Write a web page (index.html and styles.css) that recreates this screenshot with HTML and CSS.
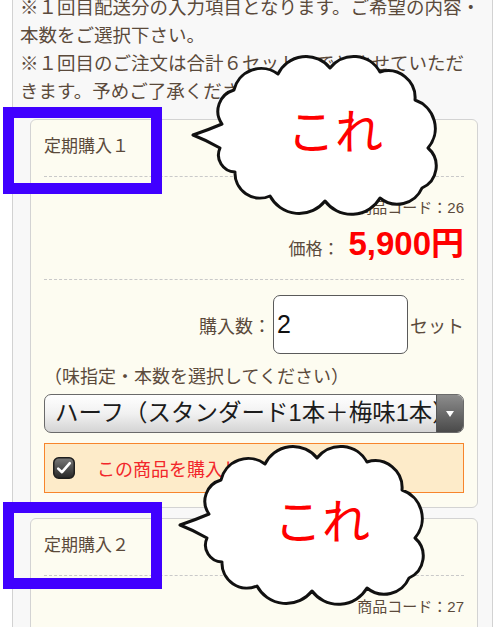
FILE: index.html
```html
<!DOCTYPE html>
<html lang="ja">
<head>
<meta charset="utf-8">
<title>定期購入</title>
<link rel="stylesheet" href="styles.css">
</head>
<body>
<div class="panel">
  <div class="notes">
    <p>※１回目配送分の入力項目となります。ご希望の内容・本数をご選択下さい。</p>
    <p>※１回目のご注文は合計６セットまでとさせていただ<br>きます。予めご了承ください。</p>
  </div>
  <div class="cards">
    <section class="card">
      <h2 class="card-title">定期購入１</h2>
      <div class="info">
        <div class="code">商品コード：26</div>
        <div class="price"><span class="price-label">価格：</span><span class="price-value">5,900円</span></div>
      </div>
      <div class="qty-row">
        <span class="qty-label">購入数：</span>
        <input class="qty" type="text" value="2">
        <span class="qty-unit">セット</span>
      </div>
      <div class="hint">（味指定・本数を選択してください）</div>
      <div class="select">
        <span class="select-text">ハーフ（スタンダード1本＋梅味1本）</span>
        <span class="select-btn"><svg width="10" height="8" viewBox="0 0 10 8"><path d="M1 1 L9 1 L5 7 Z" fill="#fff"/></svg></span>
      </div>
      <div class="buy">
        <span class="check"><svg width="22" height="22" viewBox="0 0 22 22"><defs><linearGradient id="cbg" x1="0" y1="0" x2="0" y2="1"><stop offset="0" stop-color="#7a7a7a"/><stop offset="1" stop-color="#262626"/></linearGradient></defs><rect x="0.75" y="0.75" width="20.5" height="20.5" rx="5" fill="url(#cbg)" stroke="#1e1e1e" stroke-width="1.5"/><path d="M5.2 11.6 L9 15.2 L16.8 6.2" fill="none" stroke="#fff" stroke-width="2.6" stroke-linecap="round" stroke-linejoin="round"/></svg></span>
        <span class="buy-text">この商品を購入します</span>
      </div>
    </section>
    <section class="card">
      <h2 class="card-title">定期購入２</h2>
      <div class="info">
        <div class="code">商品コード：27</div>
        <div class="price"><span class="price-label">価格：</span><span class="price-value">5,900円</span></div>
      </div>
    </section>
  </div>
</div>

<div class="mark mark-1"></div>
<div class="mark mark-2"></div>

<div class="cloud cloud-1">
  <svg width="260" height="175" viewBox="0 0 260 175"><path d="M32 76 A22 22 0 0 1 44 42 A28 28 0 0 1 88 26 A31 31 0 0 1 140 20 A30 30 0 0 1 190 24 A27 27 0 0 1 225 52 A30 30 0 0 1 238 100 A24 24 0 0 1 232 140 A27 27 0 0 1 190 150 A33 33 0 0 1 135 153 A33 33 0 0 1 80 148 A25 25 0 0 1 45 124 A17 17 0 0 1 30 100 Q16 92 3 87 Q18 82 32 76 Z" fill="#fff" stroke="#111" stroke-width="3" stroke-linejoin="round"/></svg>
  <span class="cloud-text">これ</span>
</div>
<div class="cloud cloud-2">
  <svg width="260" height="175" viewBox="0 0 260 175"><path d="M32 76 A22 22 0 0 1 44 42 A28 28 0 0 1 88 26 A31 31 0 0 1 140 20 A30 30 0 0 1 190 24 A27 27 0 0 1 225 52 A30 30 0 0 1 238 100 A24 24 0 0 1 232 140 A27 27 0 0 1 190 150 A33 33 0 0 1 135 153 A33 33 0 0 1 80 148 A25 25 0 0 1 45 124 A17 17 0 0 1 30 100 Q16 92 3 87 Q18 82 32 76 Z" fill="#fff" stroke="#111" stroke-width="3" stroke-linejoin="round"/></svg>
  <span class="cloud-text">これ</span>
</div>
</body>
</html>
```
FILE: styles.css
```css
* { box-sizing: border-box; }
html, body { margin: 0; padding: 0; background: #fff; }
body {
  position: relative;
  width: 498px;
  height: 627px;
  overflow: hidden;
  font-family: "Liberation Sans", "Noto Sans CJK JP", sans-serif;
  color: #5b4a3b;
}

.panel {
  margin: -7px 5px 0 12px;
  background: #f8f8f8;
  border: 1px solid #d2d2d2;
  padding: 0 7px 20px;
}

.notes p {
  margin: 0;
  font-size: 18.5px;
  line-height: 28px;
}

.cards { padding: 13px 7px 0 10px; }

.card {
  background: #fdfcf1;
  border: 1px solid #d3d3d3;
  border-radius: 6px;
  padding: 0 13px 14px;
}
.card + .card { margin-top: 10px; }

.card-title {
  margin: 0;
  height: 57px;
  font-size: 17px;
  font-weight: normal;
  line-height: 20px;
  padding: 17px 0 0;
  border-bottom: 1px dashed #c9c9c9;
}

.info {
  display: flex;
  flex-direction: column;
  align-items: flex-end;
  height: 103px;
  padding: 22px 0 0;
  border-bottom: 1px dashed #c9c9c9;
}
.code { height: 18px; font-size: 15px; line-height: 18px; }
.price {
  display: flex;
  align-items: baseline;
  height: 36px;
  margin-top: 9px;
}
.price-label { font-size: 17px; line-height: 36px; margin-right: 9px; }
.price-value { font-size: 33px; line-height: 36px; font-weight: bold; color: #ff0000; }

.qty-row {
  display: flex;
  justify-content: flex-end;
  align-items: center;
  gap: 2px;
  padding-top: 15px;
  font-size: 18px;
}
.qty {
  width: 135px;
  height: 59px;
  border: 1px solid #5a5a5a;
  border-radius: 7px;
  background: #fff;
  font-family: "Liberation Sans", sans-serif;
  font-size: 25px;
  color: #111;
  padding: 0 3px;
  margin: 0;
}

.hint {
  margin-top: 11px;
  height: 24px;
  font-size: 18px;
  line-height: 24px;
}

.select {
  margin-top: 5px;
  height: 39px;
  display: flex;
  border: 1px solid #6a6a6a;
  border-radius: 7px;
  overflow: hidden;
  background: linear-gradient(#ffffff, #f1f1f1 50%, #d4d4d4);
}
.select-text {
  flex: 1;
  min-width: 0;
  overflow: hidden;
  white-space: nowrap;
  padding-left: 10px;
  font-size: 23.5px;
  line-height: 37px;
  color: #1c1c1c;
}
.select-btn {
  width: 27px;
  display: flex;
  align-items: center;
  justify-content: center;
  background: linear-gradient(#8c8c8c, #4a4a4a);
  border-left: 1px solid #555;
}

.buy {
  margin-top: 10px;
  height: 50px;
  display: flex;
  align-items: center;
  border: 1px solid #f7852c;
  background: #fdebc9;
  padding-left: 8px;
}
.check { display: flex; width: 22px; height: 22px; }
.buy-text {
  margin-left: 22px;
  font-size: 18px;
  color: #f2262a;
}

.mark {
  position: absolute;
  left: 3px;
  width: 159px;
  height: 87px;
  border: 11px solid #4000ff;
}
.mark-1 { top: 107px; }
.mark-2 { top: 502px; }

.cloud {
  position: absolute;
  width: 260px;
  height: 175px;
}
.cloud svg { display: block; }
.cloud-1 { left: 190px; top: 48px; }
.cloud-2 { left: 177px; top: 438px; }
.cloud-text {
  position: absolute;
  left: 145px;
  top: 80px;
  transform: translate(-50%, -50%);
  font-family: "Noto Sans CJK JP", sans-serif;
  font-size: 48px;
  line-height: 1;
  color: #ff0000;
  white-space: nowrap;
}
```
